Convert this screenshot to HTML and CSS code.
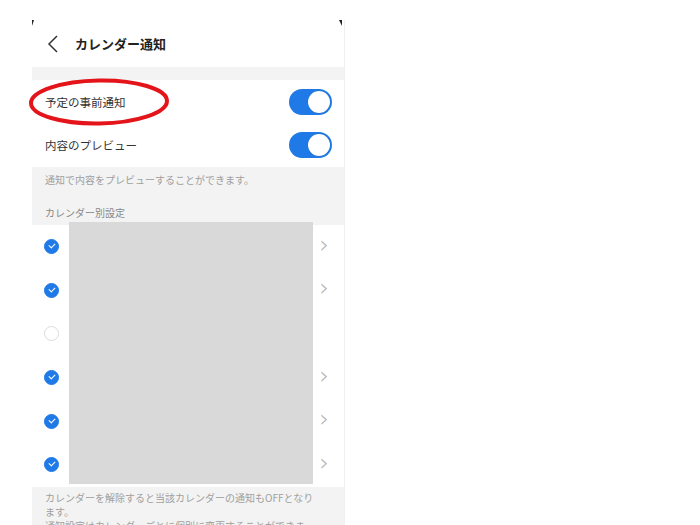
FILE: index.html
```html
<!DOCTYPE html>
<html lang="ja">
<head>
    <meta charset="UTF-8">
    <meta name="viewport" content="width=device-width, initial-scale=1.0">
    <title>カレンダー通知</title>
    <link rel="stylesheet" href="styles.css">
</head>
<body>

    <div class="screen">

        <!-- Header -->
        <div class="header">
            <svg class="back" width="12" height="18" viewBox="0 0 12 18">
                <path d="M10 1 L2 9 L10 17" fill="none" stroke="#333" stroke-width="1.5"/>
            </svg>
            <span class="title">カレンダー通知</span>
        </div>

        <div class="spacer"></div>

        <!-- Toggles -->
        <div class="group">
            <div class="row">
                <span>予定の事前通知</span>
                <span class="toggle"><span class="knob"></span></span>
            </div>
            <div class="row">
                <span>内容のプレビュー</span>
                <span class="toggle"><span class="knob"></span></span>
            </div>
            <!-- red marker drawn over the first row -->
            <svg class="marker" width="144" height="50" viewBox="0 0 144 50">
                <ellipse cx="70" cy="24" rx="68" ry="21.5" fill="none" stroke="#e3141a" stroke-width="4" transform="rotate(-1 70 24)"/>
            </svg>
        </div>

        <div class="note">
            <p class="hint">通知で内容をプレビューすることができます。</p>
            <p class="section-title">カレンダー別設定</p>
        </div>

        <!-- Calendar list -->
        <div class="list">
            <div class="item"><span class="check on"></span><span class="chev">&rsaquo;</span></div>
            <div class="item"><span class="check on"></span><span class="chev">&rsaquo;</span></div>
            <div class="item"><span class="check"></span></div>
            <div class="item"><span class="check on"></span><span class="chev">&rsaquo;</span></div>
            <div class="item"><span class="check on"></span><span class="chev">&rsaquo;</span></div>
            <div class="item"><span class="check on"></span><span class="chev">&rsaquo;</span></div>
            <div class="redact"></div>
        </div>

        <div class="footer">
            <p>カレンダーを解除すると当該カレンダーの通知もOFFとなります。</p>
            <p>通知設定はカレンダーごとに個別に変更することができます。</p>
        </div>

    </div>

</body>
</html>
```

FILE: styles.css
```css
* {
    margin: 0;
    padding: 0;
    box-sizing: border-box;
}

body {
    font-family: "Noto Sans CJK JP", "Noto Sans", sans-serif;
    background-color: #fff;
    padding: 20px 0 0 32px;
    height: 525px;
    overflow: hidden;
}

.screen {
    width: 313px;
    position: relative;
    border-right: 1px solid #f0f0f0;
}

/* little dark corners of the device frame */
.screen::before,
.screen::after {
    content: '';
    position: absolute;
    top: 0;
    width: 0;
    height: 0;
    border-top: 6px solid #222;
}

.screen::before {
    left: 0;
    border-right: 2px solid transparent;
}

.screen::after {
    right: 2px;
    border-left: 3px solid transparent;
}

/* Header */
.header {
    height: 47px;
    display: flex;
    align-items: center;
    padding-left: 15px;
    gap: 16px;
}

.back {
    margin-top: 1px;
}

.title {
    font-size: 13px;
    font-weight: bold;
    color: #222;
}

.spacer {
    height: 13px;
    background: #f3f3f3;
}

/* Toggle rows */
.group {
    position: relative;
}

.row {
    height: 43.5px;
    display: flex;
    align-items: center;
    justify-content: space-between;
    padding: 0 12px 0 13px;
    font-size: 11.5px;
    color: #333;
}

.toggle {
    width: 43px;
    height: 26px;
    border-radius: 13px;
    background: #1f7ae8;
    display: flex;
    align-items: center;
    justify-content: flex-end;
    padding-right: 2px;
}

.knob {
    width: 22px;
    height: 22px;
    border-radius: 50%;
    background: #fff;
    box-shadow: 0 0 1px rgba(0, 0, 0, 0.3);
}

.marker {
    position: absolute;
    left: -3px;
    top: -2px;
}

/* Gray note area */
.note {
    background: #f3f3f3;
    height: 58px;
    padding: 6px 13px 0;
}

.hint {
    font-size: 10px;
    color: #a0a0a0;
    line-height: 14px;
}

.section-title {
    font-size: 10px;
    color: #888;
    line-height: 14px;
    margin-top: 19px;
}

/* Calendar list */
.list {
    position: relative;
}

.item {
    height: 43.6px;
    display: flex;
    align-items: center;
    justify-content: space-between;
    padding: 0 15px 0 12px;
}

.check {
    width: 15px;
    height: 15px;
    border-radius: 50%;
    border: 1px solid #dcdcdc;
    background: #fff;
    position: relative;
}

.check.on {
    background: #1f7ae8;
    border-color: #1f7ae8;
}

.check.on::after {
    content: '';
    position: absolute;
    left: 4px;
    top: 3px;
    width: 5px;
    height: 3px;
    border-left: 1.3px solid #fff;
    border-bottom: 1.3px solid #fff;
    transform: rotate(-45deg);
}

.chev {
    font-family: "DejaVu Sans", sans-serif;
    font-size: 24px;
    font-weight: 200;
    color: #b3b3b3;
    line-height: 1;
    margin-top: -4px;
}

/* gray block hiding the calendar names */
.redact {
    position: absolute;
    left: 37px;
    top: -3px;
    width: 244px;
    height: 262px;
    background: #d9d9d9;
}

/* Footer note */
.footer {
    background: #f3f3f3;
    padding: 4px 26px 10px 13px;
    font-size: 10px;
    color: #a0a0a0;
    line-height: 14px;
}
```
